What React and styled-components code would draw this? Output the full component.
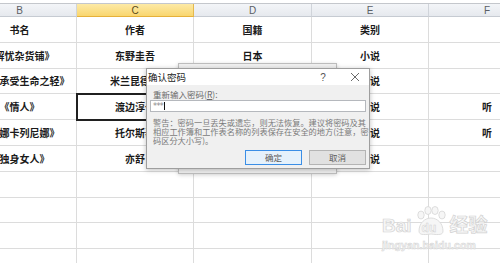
import React from "react";
import styled, { createGlobalStyle } from "styled-components";

// Global
const GlobalStyle = createGlobalStyle`
  html, body {
    margin: 0;
    padding: 0;
    background: #ffffff;
  }
  body {
    font-family: "Noto Sans CJK SC", "Noto Sans", sans-serif;
  }
`;

const columns = ["B", "C", "D", "E", "F"];

const rows = [
  ["书名", "作者", "国籍", "类别", ""],
  ["《解忧杂货铺》", "东野圭吾", "日本", "小说", ""],
  ["《不能承受生命之轻》", "米兰昆德拉", "捷克", "小说", ""],
  ["《情人》", "渡边淳一", "日本", "小说", "听"],
  ["《安娜卡列尼娜》", "托尔斯泰", "俄国", "小说", "听"],
  ["《独身女人》", "亦舒", "中国", "小说", ""],
  ["", "", "", "", ""],
  ["", "", "", "", ""],
  ["", "", "", "", ""],
  ["", "", "", "", ""],
];

// UI: App
function App() {
  return (
    <>
      <GlobalStyle />
      <Page>
        <FormulaStrip />
        <SheetViewport>
          <Sheet>
            {columns.map((c) => (
              <HeaderCell key={c} $active={c === "C"}>
                {c}
              </HeaderCell>
            ))}
            {rows.map((row, r) =>
              row.map((text, c) => (
                <Cell key={`${r}-${c}`} $selected={r === 3 && c === 1}>
                  <span>{text}</span>
                </Cell>
              ))
            )}
          </Sheet>
        </SheetViewport>

        <BackWindow />

        <Dialog>
          <TitleBar>
            <Title>确认密码</Title>
            <TitleButtons>
              <HelpMark>?</HelpMark>
              <CloseMark>
                <svg width="10" height="10" viewBox="0 0 10 10">
                  <path d="M1 1 L9 9 M9 1 L1 9" stroke="#6b6b6b" strokeWidth="1" />
                </svg>
              </CloseMark>
            </TitleButtons>
          </TitleBar>
          <DialogBody>
            <Label>
              重新输入密码(<u>R</u>):
            </Label>
            <PasswordInput>
              <span>***</span>
              <Caret />
            </PasswordInput>
            <Warning>
              <span>警告：密码一旦丢失或遗忘，则无法恢复。建议将密码及其</span>
              <span>相应工作簿和工作表名称的列表保存在安全的地方(注意，密</span>
              <span>码区分大小写)。</span>
            </Warning>
            <ButtonRow>
              <DialogButton $primary>确定</DialogButton>
              <DialogButton>取消</DialogButton>
            </ButtonRow>
          </DialogBody>
        </Dialog>

        <Watermark>
          <LogoLine>
            <span>Bai</span>
            <PawWrap>
              <svg width="36" height="30" viewBox="0 0 36 30">
                <g fill="#f6f6f6" stroke="#d6d6d6" strokeWidth="0.8">
                  <ellipse cx="8" cy="9" rx="3.2" ry="4" />
                  <ellipse cx="15" cy="4.5" rx="3.2" ry="4" />
                  <ellipse cx="22" cy="4.5" rx="3.2" ry="4" />
                  <ellipse cx="29" cy="9" rx="3.2" ry="4" />
                  <path d="M6 25 C6 17 12 12 18 12 C24 12 30 17 30 25 C30 29 26 29 18 28 C10 29 6 29 6 25 Z" />
                </g>
              </svg>
              <PawText>du</PawText>
            </PawWrap>
            <span>经验</span>
          </LogoLine>
          <SiteLine>jingyan.baidu.com</SiteLine>
        </Watermark>
      </Page>
    </>
  );
}

export default App;

// Styled: Page
const Page = styled.div`
  position: relative;
  width: 500px;
  height: 263px;
  overflow: hidden;
  background: #ffffff;
`;

// Styled: FormulaStrip
const FormulaStrip = styled.div`
  height: 3px;
  background: #ffffff;
  border-bottom: 1px solid #c4c7cc;
`;

// Styled: SheetViewport
const SheetViewport = styled.div`
  overflow: hidden;
  width: 500px;
`;

// Styled: Sheet
const Sheet = styled.div`
  display: grid;
  grid-template-columns: 114px 117px 118px 117px 117px;
  grid-template-rows: 13px;
  grid-auto-rows: 25.8px;
  margin-left: -37px;
  width: max-content;
`;

// Styled: HeaderCell
const HeaderCell = styled.div`
  display: flex;
  align-items: center;
  justify-content: center;
  font-family: "Liberation Sans", "Noto Sans", sans-serif;
  font-size: 10px;
  color: ${(p) => (p.$active ? "#5a4a1a" : "#5b5f66")};
  background: ${(p) =>
    p.$active
      ? "linear-gradient(#fdeaa6, #f9d66f)"
      : "linear-gradient(#f3f5f8, #e6e9ee)"};
  border-right: 1px solid ${(p) => (p.$active ? "#e4b94f" : "#d0d4da")};
  border-bottom: 1px solid ${(p) => (p.$active ? "#e6b13a" : "#c6cbd2")};
  box-sizing: border-box;
`;

// Styled: Cell
const Cell = styled.div`
  position: relative;
  display: flex;
  align-items: center;
  justify-content: center;
  overflow: hidden;
  white-space: nowrap;
  box-sizing: border-box;
  border-right: 1px solid #dcdcdc;
  border-bottom: 1px solid #dcdcdc;
  font-size: 10px;
  font-weight: 700;
  color: #1a1a1a;
  ${(p) =>
    p.$selected &&
    `
    outline: 2px solid #202020;
    outline-offset: -1px;
    z-index: 1;
    overflow: visible;
  `}

  & span {
    flex: none;
  }
`;

// Styled: BackWindow
const BackWindow = styled.div`
  position: absolute;
  left: 178px;
  top: 63px;
  width: 159px;
  height: 111px;
  box-sizing: border-box;
  background: #f0f0f0;
  border: 1px solid #bdbdbd;
  box-shadow: 0 1px 4px rgba(0, 0, 0, 0.18);
  z-index: 2;
`;

// Styled: Dialog
const Dialog = styled.div`
  position: absolute;
  left: 146px;
  top: 68px;
  width: 224px;
  height: 101px;
  box-sizing: border-box;
  display: flex;
  flex-direction: column;
  background: #f0f0f0;
  border: 1px solid #9e9e9e;
  box-shadow: 0 1px 5px rgba(0, 0, 0, 0.25);
  z-index: 3;
`;

// Styled: TitleBar
const TitleBar = styled.div`
  display: flex;
  align-items: center;
  justify-content: space-between;
  height: 16px;
  background: #ffffff;
  padding-left: 1px;
`;

// Styled: Title
const Title = styled.div`
  font-size: 9.5px;
  color: #1a1a1a;
  line-height: 16px;
`;

// Styled: TitleButtons
const TitleButtons = styled.div`
  display: flex;
  align-items: center;
  height: 100%;
`;

// Styled: HelpMark
const HelpMark = styled.div`
  width: 16px;
  margin-right: 10px;
  text-align: center;
  font-family: "Liberation Sans", sans-serif;
  font-size: 10px;
  color: #555555;
`;

// Styled: CloseMark
const CloseMark = styled.div`
  display: flex;
  align-items: center;
  justify-content: center;
  width: 28px;
  height: 100%;
`;

// Styled: DialogBody
const DialogBody = styled.div`
  display: flex;
  flex-direction: column;
  padding: 4px 3px 0 3px;
`;

// Styled: Label
const Label = styled.div`
  height: 10px;
  padding-left: 3px;
  font-size: 8.5px;
  line-height: 10px;
  color: #6a6a6a;

  & u {
    text-underline-offset: 1px;
  }
`;

// Styled: PasswordInput
const PasswordInput = styled.div`
  display: flex;
  align-items: center;
  height: 12px;
  margin-top: 1px;
  padding-left: 2px;
  box-sizing: border-box;
  background: #ffffff;
  border: 1px solid #b5b8bd;
  font-family: "DejaVu Sans", sans-serif;
  font-size: 8px;
  line-height: 8px;
  color: #8a8a8a;

  & span {
    padding-top: 2px;
    letter-spacing: -0.6px;
  }
`;

// Styled: Caret
const Caret = styled.div`
  width: 1px;
  height: 8px;
  margin-left: 1px;
  background: #111111;
`;

// Styled: Warning
const Warning = styled.div`
  display: flex;
  flex-direction: column;
  margin-top: 6px;
  padding-left: 3px;
  font-size: 8.2px;
  line-height: 9.2px;
  color: #7a7a7a;
  white-space: nowrap;
`;

// Styled: ButtonRow
const ButtonRow = styled.div`
  display: flex;
  justify-content: flex-end;
  gap: 7px;
  margin-top: 4px;
`;

// Styled: DialogButton
const DialogButton = styled.div`
  display: flex;
  align-items: center;
  justify-content: center;
  width: 57px;
  height: 15px;
  box-sizing: border-box;
  font-size: 8.5px;
  color: #5a5a5a;
  background: ${(p) => (p.$primary ? "#e5f1fb" : "#e1e1e1")};
  border: 1px solid ${(p) => (p.$primary ? "#3a8ee6" : "#b4b4b4")};
`;

// Styled: Watermark
const Watermark = styled.div`
  position: absolute;
  left: 382px;
  top: 206px;
  display: flex;
  flex-direction: column;
  align-items: flex-start;
  z-index: 4;
  pointer-events: none;
`;

// Styled: LogoLine
const LogoLine = styled.div`
  display: flex;
  align-items: flex-end;
  font-family: "Liberation Sans", "Noto Sans CJK SC", sans-serif;
  font-weight: 700;
  font-size: 19px;
  line-height: 20px;
  color: #f7f7f7;
  -webkit-text-stroke: 0.7px #d2d2d2;
`;

// Styled: PawWrap
const PawWrap = styled.div`
  position: relative;
  width: 36px;
  height: 30px;
  margin: 0 1px;
`;

// Styled: PawText
const PawText = styled.div`
  position: absolute;
  left: 9px;
  bottom: 2px;
  font-size: 12px;
  line-height: 12px;
  -webkit-text-stroke: 0.5px #d2d2d2;
`;

// Styled: SiteLine
const SiteLine = styled.div`
  margin-top: 3px;
  font-family: "Liberation Sans", sans-serif;
  font-weight: 700;
  font-size: 10.5px;
  letter-spacing: 0.1px;
  color: #f4f4f4;
  -webkit-text-stroke: 0.5px #d4d4d4;
`;
